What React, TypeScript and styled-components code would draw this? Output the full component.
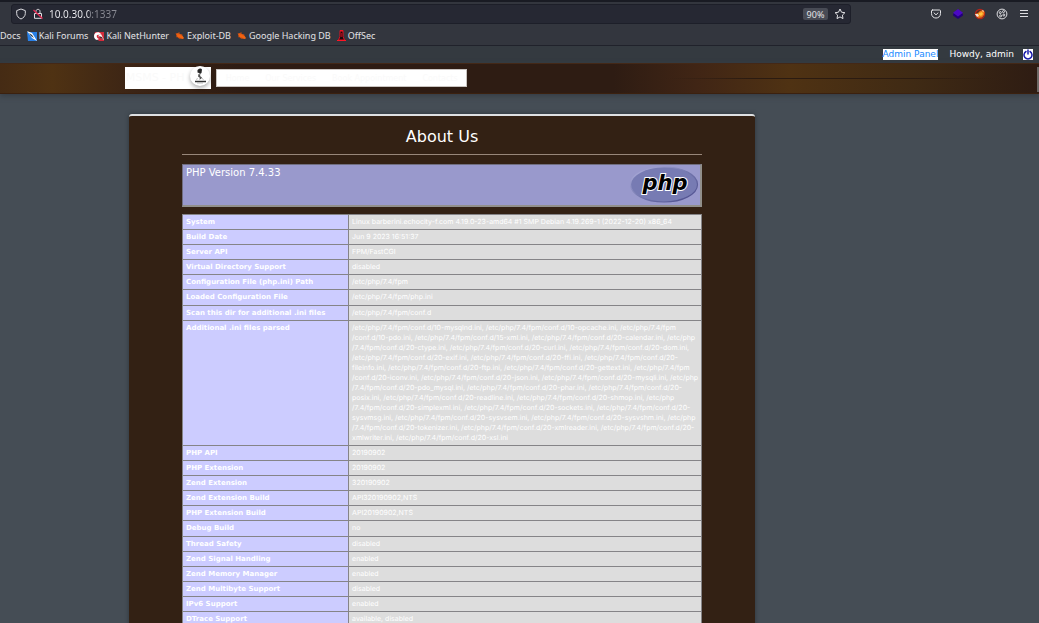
import React from "react";
import styled, { createGlobalStyle } from "styled-components";

const Global = createGlobalStyle`
  * { box-sizing: border-box; }
  html, body, #root { height: 100%; }
  body { margin: 0; background: #454d55; color: #fff; overflow: hidden; font-family: "DejaVu Sans", sans-serif; }
  button, input { font: inherit; color: inherit; }
  button { display: inline-flex; align-items: center; justify-content: center; padding: 0; border: 0; background: none; }
  svg { display: block; flex: none; }
`;

const Window = styled.div`
  display: flex;
  flex-direction: column;
  height: 100vh;
  overflow: hidden;
`;
const Chrome = styled.header`
  flex: none;
  height: 46px;
  border-top: 2px solid #191b23;
  border-bottom: 1px solid #20222b;
  background: #33363e;
  color: #e3e3e6;
  font-family: "Noto Sans", sans-serif;
`;
const Toolbar = styled.div`
  display: flex;
  align-items: center;
  justify-content: space-between;
  height: 24px;
  padding: 0 9px 0 11px;
`;
const AddressBar = styled.div`
  display: flex;
  align-items: center;
  flex: 0 1 840px;
  gap: 5px;
  height: 20px;
  padding: 0 4px 0 3px;
  border: 1px solid #1d1f29;
  border-radius: 3px;
  background: #262833;
`;
const UrlField = styled.input`
  && {
    flex: 1;
    min-width: 0;
    height: 16px;
    padding: 0;
    border: 0;
    outline: 0;
    background: linear-gradient(90deg, #f4f4f8 40px, #8b8c95 40px);
    background-clip: text;
    -webkit-background-clip: text;
    color: transparent;
    font-size: 10px;
    line-height: 16px;
  }
`;
const Zoom = styled.button`
  && {
    width: 25px;
    height: 12px;
    margin-right: 1px;
    border-radius: 2px;
    background: #484b55;
    font-size: 9px;
  }
`;
const Actions = styled.div`
  display: flex;
  gap: 10px;
`;
const IconButton = styled.button`
  width: 12px;
  height: 12px;
`;
const Bookmarks = styled.nav`
  display: flex;
  align-items: center;
  gap: 6px;
  height: 19px;
`;
const Bookmark = styled.a`
  display: flex;
  align-items: center;
  gap: 2px;
  color: #e3e3e6;
  font-size: 9px;
  line-height: 16px;
  text-decoration: none;
  white-space: nowrap;
`;

const AccountBar = styled.div`
  display: flex;
  flex: none;
  align-items: center;
  justify-content: flex-end;
  gap: 11px;
  height: 17px;
  padding-right: 6px;
  background: #343a40;
  font-size: 9px;
  line-height: 11px;
`;
const AdminLink = styled.a`
  background: #fff;
  color: #1688ff;
  text-decoration: none;
`;
const PowerButton = styled.button`
  && {
    width: 10px;
    height: 11px;
    margin-left: -2px;
    background: #fff;
  }
`;
const SiteHeader = styled.header`
  position: relative;
  z-index: 1;
  display: flex;
  flex: none;
  align-items: center;
  gap: 5px;
  height: 31px;
  padding: 0 12% 1px;
  border-top: 1px solid #432817;
  border-bottom: 1px solid #3b210f;
  background:
    linear-gradient(90deg, transparent 64%, #2b1b11 72%, #2b1b11 88%, transparent 96%) 0 14px / 100% 1px no-repeat,
    linear-gradient(90deg, #452b14 0, #4f3213 5%, #3b2415 13%, #2e1c13 23%, #2e1c13 59%, #402515 67%, #4f3213 76%, #3f2a14 88%, #2e1c13 100%);
  box-shadow: 0 2px 5px #363d44;
`;
const Brand = styled.a`
  display: flex;
  flex: none;
  align-items: center;
  width: 86px;
  height: 22px;
  background: #fff;
  color: #fafafa;
  font-size: 11px;
  line-height: 16px;
  text-decoration: none;
  white-space: nowrap;
`;
const BrandName = styled.span`
  width: 65px;
  padding-left: 1px;
`;
const Seal = styled.span`
  flex: none;
  width: 20px;
  height: 20px;
  margin-bottom: 5px;
  border-radius: 50%;
  background: #fff;
  box-shadow: 0 2px 4px #0005;
`;
const SiteNav = styled.nav`
  display: flex;
  align-items: center;
  justify-content: space-between;
  width: 251px;
  height: 18px;
  padding: 0 8px 0 9px;
  border: 1px solid #c9c4c0;
  background: #fff;
  font-size: 8px;
`;
const NavLink = styled.a`
  color: #fafafa;
  text-decoration: none;
  white-space: nowrap;
`;
const ScrollThumb = styled.div`
  position: absolute;
  top: 3px;
  right: 0;
  width: 2px;
  height: 25px;
  background: #6d6966;
`;
const Content = styled.main`
  flex: 1;
  min-height: 0;
  overflow: hidden;
  padding: 20px 284px 0 129px;
`;
const Card = styled.section`
  min-height: 100%;
  padding: 0 53px;
  border-top: 2px solid #dee0e2;
  border-radius: 3px;
  background: #332114;
  box-shadow: 0 0 4px #2d343a;
`;
const Title = styled.h1`
  height: 39px;
  margin: 0 0 9px;
  padding-top: 12px;
  border-bottom: 1px solid #98877a;
  font-size: 16px;
  font-weight: 400;
  line-height: 18px;
  text-align: center;
`;
const Version = styled.div`
  display: flex;
  justify-content: space-between;
  height: 43px;
  padding: 1px 0 0 3px;
  border: 1px solid #706e80;
  border-right: 2px solid #918f8b;
  border-bottom: 2px solid #918f8b;
  background: #9999cc;
`;
const VersionText = styled.h2`
  margin: 0;
  font-size: 10px;
  font-weight: 400;
  line-height: 13px;
`;
const InfoTable = styled.table`
  width: 100%;
  margin-top: 7px;
  border-collapse: collapse;
  border: 1px solid #77767c;
  table-layout: fixed;
  background: #ddd;
  font-size: 7px;
  line-height: 10px;
  text-rendering: geometricPrecision;
`;
const Row = styled.tr`
  height: 15px;
  &:nth-child(8n + 6) { height: 16px; }
`;
const Key = styled.th`
  width: 32%;
  padding: 2px 3px;
  border: 1px solid #858487;
  background: #ccccff;
  text-align: left;
  vertical-align: top;
`;
const Value = styled.td`
  padding: 2px 3px;
  border: 1px solid #858487;
  font-family: Inter, "DejaVu Sans", sans-serif;
  vertical-align: top;
  white-space: pre;
`;

const iniFiles = `/etc/php/7.4/fpm/conf.d/10-mysqlnd.ini, /etc/php/7.4/fpm/conf.d/10-opcache.ini, /etc/php/7.4/fpm
/conf.d/10-pdo.ini, /etc/php/7.4/fpm/conf.d/15-xml.ini, /etc/php/7.4/fpm/conf.d/20-calendar.ini, /etc/php
/7.4/fpm/conf.d/20-ctype.ini, /etc/php/7.4/fpm/conf.d/20-curl.ini, /etc/php/7.4/fpm/conf.d/20-dom.ini,
/etc/php/7.4/fpm/conf.d/20-exif.ini, /etc/php/7.4/fpm/conf.d/20-ffi.ini, /etc/php/7.4/fpm/conf.d/20-
fileinfo.ini, /etc/php/7.4/fpm/conf.d/20-ftp.ini, /etc/php/7.4/fpm/conf.d/20-gettext.ini, /etc/php/7.4/fpm
/conf.d/20-iconv.ini, /etc/php/7.4/fpm/conf.d/20-json.ini, /etc/php/7.4/fpm/conf.d/20-mysqli.ini, /etc/php
/7.4/fpm/conf.d/20-pdo_mysql.ini, /etc/php/7.4/fpm/conf.d/20-phar.ini, /etc/php/7.4/fpm/conf.d/20-
posix.ini, /etc/php/7.4/fpm/conf.d/20-readline.ini, /etc/php/7.4/fpm/conf.d/20-shmop.ini, /etc/php
/7.4/fpm/conf.d/20-simplexml.ini, /etc/php/7.4/fpm/conf.d/20-sockets.ini, /etc/php/7.4/fpm/conf.d/20-
sysvmsg.ini, /etc/php/7.4/fpm/conf.d/20-sysvsem.ini, /etc/php/7.4/fpm/conf.d/20-sysvshm.ini, /etc/php
/7.4/fpm/conf.d/20-tokenizer.ini, /etc/php/7.4/fpm/conf.d/20-xmlreader.ini, /etc/php/7.4/fpm/conf.d/20-
xmlwriter.ini, /etc/php/7.4/fpm/conf.d/20-xsl.ini`;

const info = [
  ["System", "Linux barberini.echocity-f.com 4.19.0-23-amd64 #1 SMP Debian 4.19.269-1 (2022-12-20) x86_64"],
  ["Build Date", "Jun 9 2023 16:51:37"],
  ["Server API", "FPM/FastCGI"],
  ["Virtual Directory Support", "disabled"],
  ["Configuration File (php.ini) Path", "/etc/php/7.4/fpm"],
  ["Loaded Configuration File", "/etc/php/7.4/fpm/php.ini"],
  ["Scan this dir for additional .ini files", "/etc/php/7.4/fpm/conf.d"],
  ["Additional .ini files parsed", iniFiles],
  ["PHP API", "20190902"],
  ["PHP Extension", "20190902"],
  ["Zend Extension", "320190902"],
  ["Zend Extension Build", "API320190902,NTS"],
  ["PHP Extension Build", "API20190902,NTS"],
  ["Debug Build", "no"],
  ["Thread Safety", "disabled"],
  ["Zend Signal Handling", "enabled"],
  ["Zend Memory Manager", "enabled"],
  ["Zend Multibyte Support", "disabled"],
  ["IPv6 Support", "enabled"],
  ["DTrace Support", "available, disabled"],
];

const ShieldIcon = () => (
  <svg width="12" height="12" viewBox="0 0 12 12" fill="none" stroke="#dddde1">
    <path d="M6 1 10.300 2.600V5.500C10.300 8.200 8.300 10 6 11 3.700 10 1.700 8.200 1.700 5.500V2.600Z" />
  </svg>
);
const InsecureIcon = () => (
  <svg width="12" height="12" viewBox="0 0 12 12" fill="none" stroke="#dddde1">
    <path d="M4 5V3.300C4 .7 8 .7 8 3.300V5M2.500 5.500h7v4.800h-7z" />
    <path d="m1.500 2 9 8.500" stroke="#e52951" strokeWidth="1.300" />
  </svg>
);
const StarIcon = () => (
  <svg width="12" height="12" viewBox="0 0 12 12" fill="none" stroke="#e3e3e6" strokeLinejoin="round">
    <path d="m6 1 1.500 3.200 3.400.5-2.500 2.400.6 3.500L6 8.900l-3 1.700.6-3.500L1.100 4.700l3.400-.5Z" />
  </svg>
);
const PocketIcon = () => (
  <svg width="12" height="12" viewBox="0 0 12 12" fill="none" stroke="#e3e3e6" strokeLinecap="round">
    <path d="M2.500 2h7q1 0 1 1v2.400C10.500 11.600 1.500 11.600 1.500 5.400V3q0-1 1-1ZM4 4.900l2 1.900 2-1.900" />
  </svg>
);
const LayersIcon = () => (
  <svg width="12" height="12" viewBox="0 0 12 12">
    <path d="m6 3 5 3v1.500L6 11 1 7.500V6Z" fill="#230078" />
    <path d="m6 1 5 3.800-5 3.800-5-3.800Z" fill="#4b08c4" />
  </svg>
);
const FoxIcon = () => (
  <svg width="12" height="12" viewBox="0 0 12 12">
    <circle cx="6" cy="6" r="4.600" fill="#5a2a20" stroke="#b5231a" strokeWidth="1.200" />
    <path d="m1 6 3-1 2-2 3-1 1.500 2-.5 3-2 2.500-4 .5-1-2Z" fill="#ee7a1a" />
    <path d="m5 5 3-1 1 2-2 2-2-1Z" fill="#ffc23c" />
    <path d="m1 6 3 0 1 2-2 1ZM8 2l2 1-1 1Z" fill="#efe5d8" />
  </svg>
);
const CookieIcon = () => (
  <svg width="12" height="12" viewBox="0 0 12 12" fill="none" stroke="#dddde1">
    <circle cx="6" cy="6" r="4.900" />
    <circle cx="4.300" cy="4.600" r="1" /><circle cx="4.600" cy="7.900" r="1" /><circle cx="7.800" cy="7" r="1" />
    <circle cx="7.500" cy="3.600" r="1" />
  </svg>
);
const MenuIcon = () => (
  <svg width="12" height="12" viewBox="0 0 12 12" stroke="#dddde1"><path d="M2 2.500h8M2 5.500h8M2 8.500h8" /></svg>
);
const KaliIcon = () => (
  <svg width="10" height="10" viewBox="0 0 10 10">
    <path d="M0 1h10v9H1Z" fill="#287fe5" />
    <path d="M0 0 5 2l2 3 3 5-5-3-2-3Z" fill="#fff" />
    <path d="m2 2 3 2 2 3-3-2Z" fill="#26384a" />
  </svg>
);
const NetHunterIcon = () => (
  <svg width="10" height="10" viewBox="0 0 10 10">
    <path d="M1 1h9v9H5L0 5Z" fill="#d42b3b" />
    <path d="M0 5c0-4 5-5 7-2L5 4C2 3 2 7 5 8L3 9Q0 8 0 5Z" fill="#fff" />
    <path d="m4 5 3-2 3 6-3-2Z" fill="#fff" />
    <path d="m5 5 3 1 1 2-3-1Z" fill="#59242b" />
  </svg>
);
const BugIcon = () => (
  <svg width="10" height="10" viewBox="0 0 10 10">
    <path d="m1 3 2-1 2 1 2 1 2 3-1 1-3-.500L2 6Z" fill="#f16412" />
    <path d="m1 2 1 2M4 1v3M1 6l2-1M4 8l1-2M7 3 6 5" stroke="#d84b0b" strokeWidth=".7" />
  </svg>
);
const OffSecIcon = () => (
  <svg width="9" height="11" viewBox="0 0 9 11">
    <path d="M3 .5h3v6l1.500 3.500h-6L3 6.500Z" fill="#180a0e" stroke="#e20e20" />
    <path d="M3 1h3M0 10.500h9" stroke="#ff1525" />
    <path d="M4.500 3v4" stroke="#8b0d1b" />
  </svg>
);
const PowerIcon = () => (
  <svg width="10" height="11" viewBox="0 0 10 11" fill="none" stroke="#171bac" strokeWidth="1.500" strokeLinecap="round">
    <path d="M3 2.500a4 4 0 1 0 4 0M5 1v4" />
  </svg>
);
const BarberIcon = () => (
  <svg width="20" height="20" viewBox="0 0 20 20">
    <path d="M7.500 4q3-2.500 4.500-.500L11.500 7 10 8 9 7 7.500 6.500Z" fill="#282828" />
    <path d="m8.500 8 2 .500-.500 1.500 2 1.500-1 1.500-2 .500 1-1.500-2-1.500Z" fill="#555" />
    <path d="M5 15.500h11" stroke="#333" strokeWidth="1.500" />
    <path d="m7.500 12-1 2M12 12l1.500 2M7 17h6" stroke="#999" strokeWidth=".6" />
  </svg>
);
const PhpLogo = () => (
  <svg width="70" height="38" viewBox="0 0 70 38" role="img" aria-label="PHP logo">
    <defs>
      <linearGradient id="phpRim" x1="0" y1="0" x2="1" y2="1">
        <stop offset="0" stopColor="#b5b5e1" /><stop offset=".5" stopColor="#7377ad" /><stop offset="1" stopColor="#484889" />
      </linearGradient>
    </defs>
    <ellipse cx="34" cy="18.500" rx="33.500" ry="17.500" fill="#777bb3" stroke="url(#phpRim)" strokeWidth="1.200" />
    <text x="35" y="24" textAnchor="middle" fontFamily="DejaVu Sans, sans-serif" fontSize="21" fontWeight="700" fontStyle="italic" fill="#000" stroke="#fff" strokeWidth="2" paintOrder="stroke">php</text>
  </svg>
);

export default function App() {
  return (
    <Window>
      <Global />
      <Chrome>
        <Toolbar>
          <AddressBar>
            <IconButton aria-label="Tracking protection"><ShieldIcon /></IconButton>
            <IconButton aria-label="Connection not secure"><InsecureIcon /></IconButton>
            <UrlField aria-label="Address" defaultValue="10.0.30.0:1337" />
            <Zoom>90%</Zoom>
            <IconButton aria-label="Bookmark this page"><StarIcon /></IconButton>
          </AddressBar>
          <Actions>
            <IconButton aria-label="Save to Pocket"><PocketIcon /></IconButton>
            <IconButton aria-label="Layers"><LayersIcon /></IconButton>
            <IconButton aria-label="Proxy"><FoxIcon /></IconButton>
            <IconButton aria-label="Cookies"><CookieIcon /></IconButton>
            <IconButton aria-label="Menu"><MenuIcon /></IconButton>
          </Actions>
        </Toolbar>
        <Bookmarks aria-label="Bookmarks">
          <Bookmark href="#">Docs</Bookmark>
          <Bookmark href="#"><KaliIcon />Kali Forums</Bookmark>
          <Bookmark href="#"><NetHunterIcon />Kali NetHunter</Bookmark>
          <Bookmark href="#"><BugIcon />Exploit-DB</Bookmark>
          <Bookmark href="#"><BugIcon />Google Hacking DB</Bookmark>
          <Bookmark href="#"><OffSecIcon />OffSec</Bookmark>
        </Bookmarks>
      </Chrome>
      <AccountBar>
        <AdminLink href="#">Admin Panel</AdminLink>
        <span>Howdy, admin</span>
        <PowerButton aria-label="Log out"><PowerIcon /></PowerButton>
      </AccountBar>
      <SiteHeader>
        <Brand href="#"><BrandName>MSMS - PH</BrandName><Seal><BarberIcon /></Seal></Brand>
        <SiteNav>
          <NavLink href="#">Home</NavLink>
          <NavLink href="#">Our Services</NavLink>
          <NavLink href="#">Book Appointment</NavLink>
          <NavLink href="#">Contacts</NavLink>
        </SiteNav>
        <ScrollThumb />
      </SiteHeader>
      <Content>
        <Card>
          <Title>About Us</Title>
          <Version><VersionText>PHP Version 7.4.33</VersionText><PhpLogo /></Version>
          <InfoTable>
            <tbody>
              {info.map(([key, value]) => <Row key={key}><Key scope="row">{key}</Key><Value>{value}</Value></Row>)}
            </tbody>
          </InfoTable>
        </Card>
      </Content>
    </Window>
  );
}
